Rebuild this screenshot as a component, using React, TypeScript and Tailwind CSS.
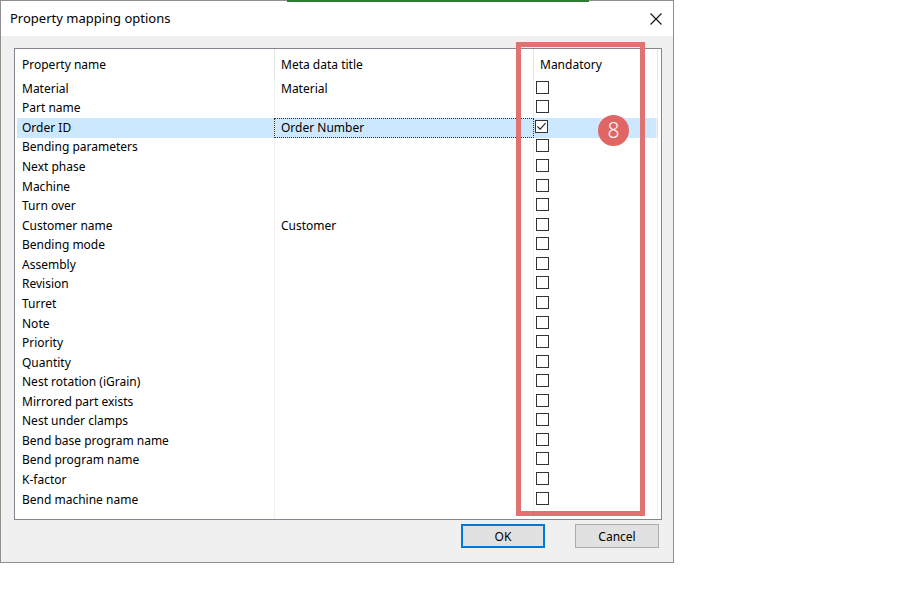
import React from 'react';

const rows: { name: string; meta: string; checked?: boolean; selected?: boolean }[] = [
  { name: 'Material', meta: 'Material' },
  { name: 'Part name', meta: '' },
  { name: 'Order ID', meta: 'Order Number', checked: true, selected: true },
  { name: 'Bending parameters', meta: '' },
  { name: 'Next phase', meta: '' },
  { name: 'Machine', meta: '' },
  { name: 'Turn over', meta: '' },
  { name: 'Customer name', meta: 'Customer' },
  { name: 'Bending mode', meta: '' },
  { name: 'Assembly', meta: '' },
  { name: 'Revision', meta: '' },
  { name: 'Turret', meta: '' },
  { name: 'Note', meta: '' },
  { name: 'Priority', meta: '' },
  { name: 'Quantity', meta: '' },
  { name: 'Nest rotation (iGrain)', meta: '' },
  { name: 'Mirrored part exists', meta: '' },
  { name: 'Nest under clamps', meta: '' },
  { name: 'Bend base program name', meta: '' },
  { name: 'Bend program name', meta: '' },
  { name: 'K-factor', meta: '' },
  { name: 'Bend machine name', meta: '' },
];

function Checkbox({ checked }: { checked?: boolean }) {
  return (
    <div className="w-[13px] h-[13px] border border-[#333333] bg-white flex items-center justify-center">
      {checked && (
        <svg width="11" height="11" viewBox="0 0 11 11">
          <path d="M1.5 5.5 L4.2 8.2 L9.5 2.2" fill="none" stroke="#222" strokeWidth="1.1" />
        </svg>
      )}
    </div>
  );
}

export default function App() {
  return (
    <div
      className="relative w-[912px] h-[613px] bg-white text-black"
      style={{ fontFamily: '"Noto Sans", "Open Sans", sans-serif' }}
    >
      {/* dialog window */}
      <div className="w-[674px] h-[563px] border border-[#8f8f8f] flex flex-col bg-[#f0f0f0]">
        {/* title bar */}
        <div className="h-[35px] bg-white flex items-center justify-between pl-[9px] pr-[11px]">
          <span className="text-[13px] pt-px">Property mapping options</span>
          <svg width="12" height="12" viewBox="0 0 12 12">
            <path d="M0.5 0.5 L11.5 11.5 M11.5 0.5 L0.5 11.5" stroke="#111" strokeWidth="1.1" />
          </svg>
        </div>

        {/* body */}
        <div className="flex-1 flex flex-col pt-[12px] pl-[13px] pr-[13px]">
          <div className="w-[648px] h-[472px] border border-[#828790] bg-white flex flex-col text-[12px]">
            {/* header */}
            <div className="flex h-[30px] ml-[2px]">
              <div className="w-[258px] border-r border-[#e5e5e5] pl-[5px] pt-[2px] flex items-center">Property name</div>
              <div className="w-[259px] border-r border-[#e5e5e5] pl-[6px] pt-[2px] flex items-center">Meta data title</div>
              <div className="w-[124px] border-r border-[#e5e5e5] pl-[6px] pt-[2px] flex items-center">Mandatory</div>
            </div>
            {/* rows */}
            {rows.map((r) => (
              <div key={r.name} className={`flex h-[19.57px] ml-[2px] w-[641px] ${r.selected ? 'bg-[#cce8ff]' : ''}`}>
                <div className="w-[258px] border-r border-[#f0f0f0] pl-[5px] flex items-center">{r.name}</div>
                {r.selected ? (
                  <div className="w-[260px] -ml-px border border-dotted border-[#333333] pl-[6px] flex items-center">
                    {r.meta}
                  </div>
                ) : (
                  <div className="w-[259px] border-r border-[#f0f0f0] pl-[6px] flex items-center">{r.meta}</div>
                )}
                <div className={`w-[124px] border-r border-[#f0f0f0] pl-[2px] flex items-center ${r.selected ? '-ml-px' : ''}`}>
                  <div className="-mt-[3px]">
                    <Checkbox checked={r.checked} />
                  </div>
                </div>
              </div>
            ))}
            {/* filler */}
            <div className="flex flex-1 ml-[2px]">
              <div className="w-[258px] border-r border-[#f0f0f0]" />
              <div className="w-[259px] border-r border-[#f0f0f0]" />
              <div className="w-[124px] border-r border-[#f0f0f0]" />
            </div>
          </div>

          {/* buttons */}
          <div className="flex justify-end gap-[30px] mt-[4px] pr-[1px] text-[12px]">
            <button className="w-[84px] h-[24px] border-2 border-[#0078d7] bg-[#e1e1e1] flex items-center justify-center pt-px">
              OK
            </button>
            <button className="w-[84px] h-[24px] border border-[#adadad] bg-[#e1e1e1] flex items-center justify-center pt-px">
              Cancel
            </button>
          </div>
        </div>
      </div>

      {/* background window edge peeking over the top */}
      <div className="absolute left-[287px] top-0 w-[302px] h-[2px] bg-[#2f7d32]" />

      {/* annotation overlay */}
      <div className="absolute left-[516px] top-[42px] w-[129px] h-[474px] border-[5px] border-[#e07272]" />
      <div className="absolute left-[598px] top-[115px] w-[31px] h-[31px] rounded-full bg-[#e06666] flex items-center justify-center text-white text-[21px] font-light leading-none">
        8
      </div>
    </div>
  );
}
